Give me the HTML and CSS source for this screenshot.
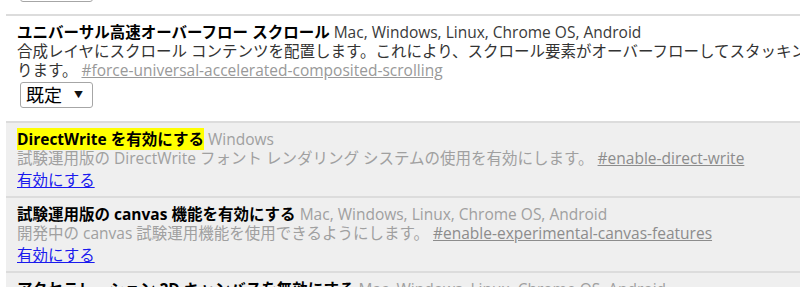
FILE: index.html
```
<!DOCTYPE html>
<html lang="ja">
<head>
<meta charset="utf-8">
<title>試験運用機能</title>
<link rel="stylesheet" href="styles.css">
</head>
<body>
<div class="experiments">
  <div class="experiment prev">
    <div class="actions select-row"><span class="select">既定 <span class="arrow">▼</span></span></div>
  </div>

  <div class="experiment">
    <div class="title"><span class="name">ユニバーサル高速オーバーフロー スクロール</span> <span class="platforms">Mac, Windows, Linux, Chrome OS, Android</span></div>
    <div class="desc">合成レイヤにスクロール コンテンツを配置します。これにより、スクロール要素がオーバーフローしてスタッキング コンテキストと包含ブロックが作成されることで、高速スクロールが可能にな<br>ります。 <a class="permalink" href="#force-universal-accelerated-composited-scrolling">#force-universal-accelerated-composited-scrolling</a></div>
    <div class="actions select-row"><span class="select">既定 <span class="arrow">▼</span></span></div>
  </div>

  <div class="experiment unsupported">
    <div class="title"><span class="name mark">DirectWrite を有効にする</span> <span class="platforms">Windows</span></div>
    <div class="desc">試験運用版の DirectWrite フォント レンダリング システムの使用を有効にします。 <a class="permalink" href="#enable-direct-write">#enable-direct-write</a></div>
    <div class="actions"><a class="toggle" href="#">有効にする</a></div>
  </div>

  <div class="experiment unsupported">
    <div class="title"><span class="name">試験運用版の canvas 機能を有効にする</span> <span class="platforms">Mac, Windows, Linux, Chrome OS, Android</span></div>
    <div class="desc">開発中の canvas 試験運用機能を使用できるようにします。 <a class="permalink" href="#enable-experimental-canvas-features">#enable-experimental-canvas-features</a></div>
    <div class="actions"><a class="toggle" href="#">有効にする</a></div>
  </div>

  <div class="experiment unsupported">
    <div class="title"><span class="name">アクセラレーション 2D キャンバスを無効にする</span> <span class="platforms">Mac, Windows, Linux, Chrome OS, Android</span></div>
    <div class="desc">GPU を使用して 2D canvas のレンダリングを行う機能を無効にし、代わりにソフトウェア レンダリングを使用します。</div>
    <div class="actions"><a class="toggle" href="#">有効にする</a></div>
  </div>
</div>
</body>
</html>
```
FILE: styles.css
```
html, body {
  margin: 0;
  padding: 0;
  background: #fff;
  overflow: hidden;
}

body {
  font-family: "Open Sans", "Noto Sans CJK JP", sans-serif;
  font-size: 15.5px;
  line-height: 19px;
  color: #333;
}

.experiments {
  margin-left: 6px;
  width: 2400px;
}

.experiment {
  border-top: 2px solid #dcdcdc;
  padding: 7px 0 6px 11px;
}

.experiment.prev {
  border-top: 0;
  padding-top: 0;
  padding-bottom: 5px;
  margin-top: -26px;
}

.experiment.unsupported {
  background: #efefef;
  color: #a0a0a0;
}

.name {
  font-weight: bold;
  color: #000;
}

.mark {
  background: #ffff00;
}

.platforms {
  color: #3a3a3a;
}

.unsupported .platforms {
  color: #a0a0a0;
}

.permalink {
  color: #999;
  text-decoration: underline;
}

.unsupported .permalink {
  color: #8c8c8c;
}

.actions {
  margin-top: 3px;
}

.actions.select-row {
  margin: 2px 0 7px 3px;
  display: flex;
}

.select {
  display: inline-flex;
  align-items: center;
  box-sizing: border-box;
  height: 26px;
  width: 73px;
  padding: 0 0 0 5px;
  border: 1px solid #a6a6a6;
  border-radius: 3px;
  background: #fff;
  color: #000;
  font-size: 18px;
  line-height: 24px;
}

.arrow {
  font-size: 9px;
  margin-left: 12px;
  color: #111;
}

.toggle {
  color: #1a1aee;
  text-decoration: underline;
}
```
